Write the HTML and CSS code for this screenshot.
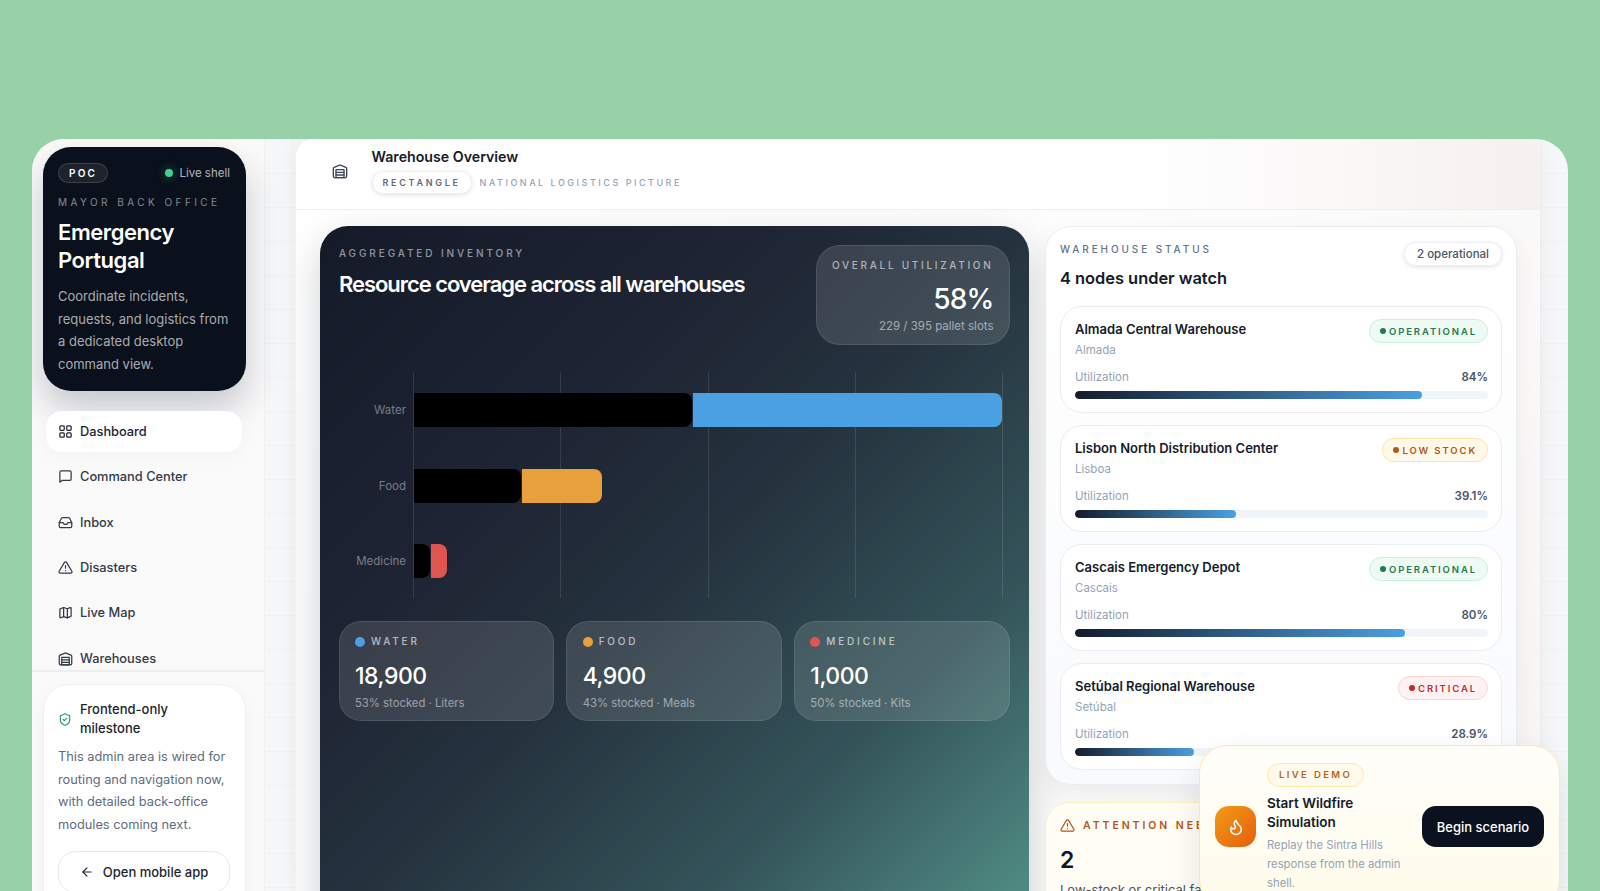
FILE: index.html
```html
<!DOCTYPE html>
<html lang="en">
<head>
  <meta charset="UTF-8" />
  <title>Warehouse Overview</title>
  <link rel="stylesheet" href="styles.css">
</head>
<body>
  <div class="window">
    <!-- Sidebar -->
    <aside class="sidebar">
      <div class="hero">
        <div class="hero-top">
          <span class="poc">POC</span>
          <span class="live"><i class="live-dot"></i>Live shell</span>
        </div>
        <div class="hero-eyebrow">MAYOR BACK OFFICE</div>
        <h1 class="hero-title">Emergency Portugal</h1>
        <p class="hero-text">Coordinate incidents, requests, and logistics from a dedicated desktop command view.</p>
      </div>

      <nav class="nav">
        <a class="nav-item active">
          <svg class="icon" viewBox="0 0 24 24"><rect x="3" y="3" width="7" height="7" rx="1.5"/><rect x="14" y="3" width="7" height="7" rx="1.5"/><rect x="3" y="14" width="7" height="7" rx="1.5"/><rect x="14" y="14" width="7" height="7" rx="1.5"/></svg>
          Dashboard
        </a>
        <a class="nav-item">
          <svg class="icon" viewBox="0 0 24 24"><path d="M3 21V5a2 2 0 0 1 2-2h14a2 2 0 0 1 2 2v11a2 2 0 0 1-2 2H7z"/></svg>
          Command Center
        </a>
        <a class="nav-item">
          <svg class="icon" viewBox="0 0 24 24"><path d="M22 12h-6l-2 3h-4l-2-3H2"/><path d="M5.5 5.1 2 12v6a2 2 0 0 0 2 2h16a2 2 0 0 0 2-2v-6l-3.500-6.900A2 2 0 0 0 16.800 4H7.200a2 2 0 0 0-1.700 1.100z"/></svg>
          Inbox
        </a>
        <a class="nav-item">
          <svg class="icon" viewBox="0 0 24 24"><path d="M10.300 3.900 1.800 18a2 2 0 0 0 1.700 3h17a2 2 0 0 0 1.700-3L13.700 3.900a2 2 0 0 0-3.400 0z"/><path d="M12 9v4"/><path d="M12 17h.01"/></svg>
          Disasters
        </a>
        <a class="nav-item">
          <svg class="icon" viewBox="0 0 24 24"><path d="M9 4 3.500 6.200A1 1 0 0 0 3 7v12.500a1 1 0 0 0 1.400.900L9 18.500l6 2 5.500-2.200a1 1 0 0 0 .5-.800V5a1 1 0 0 0-1.400-.900L15 6z"/><path d="M9 4v14.500"/><path d="M15 6v14.500"/></svg>
          Live Map
        </a>
        <a class="nav-item">
          <svg class="icon" viewBox="0 0 24 24"><path d="M22 8.350V20a2 2 0 0 1-2 2H4a2 2 0 0 1-2-2V8.350A2 2 0 0 1 3.260 6.500l8-3.200a2 2 0 0 1 1.480 0l8 3.200A2 2 0 0 1 22 8.350z"/><path d="M6 18h12"/><path d="M6 14h12"/><rect x="6" y="10" width="12" height="12"/></svg>
          Warehouses
        </a>
      </nav>

      <div class="milestone">
        <div class="milestone-head">
          <svg class="shield" viewBox="0 0 24 24"><path d="M20 13c0 5-3.500 7.500-7.660 8.950a1 1 0 0 1-.67-.01C7.500 20.500 4 18 4 13V6a1 1 0 0 1 1-1c2 0 4.500-1.200 6.240-2.720a1.170 1.170 0 0 1 1.520 0C14.510 3.810 17 5 19 5a1 1 0 0 1 1 1z"/><path d="m9 12 2 2 4-4"/></svg>
          <span>Frontend-only milestone</span>
        </div>
        <p class="milestone-text">This admin area is wired for routing and navigation now, with detailed back-office modules coming next.</p>
        <a class="mobile-btn">
          <svg class="arrow" viewBox="0 0 24 24"><path d="m12 19-7-7 7-7"/><path d="M19 12H5"/></svg>
          Open mobile app
        </a>
      </div>
    </aside>

    <!-- Main panel -->
    <main class="main">
      <header class="topbar">
        <svg class="topbar-icon" viewBox="0 0 24 24"><path d="M22 8.350V20a2 2 0 0 1-2 2H4a2 2 0 0 1-2-2V8.350A2 2 0 0 1 3.260 6.500l8-3.200a2 2 0 0 1 1.480 0l8 3.200A2 2 0 0 1 22 8.350z"/><path d="M6 18h12"/><path d="M6 14h12"/><rect x="6" y="10" width="12" height="12"/></svg>
        <div>
          <div class="topbar-title">Warehouse Overview</div>
          <div class="topbar-sub">
            <span class="topbar-pill">RECTANGLE</span>
            <span class="topbar-note">NATIONAL LOGISTICS PICTURE</span>
          </div>
        </div>
      </header>

      <div class="content">
        <!-- Inventory -->
        <section class="inventory">
          <div class="inventory-head">
            <div>
              <div class="inventory-eyebrow">AGGREGATED INVENTORY</div>
              <h2 class="inventory-title">Resource coverage across all warehouses</h2>
            </div>
            <div class="overall">
              <div class="overall-label">OVERALL UTILIZATION</div>
              <div class="overall-value">58%</div>
              <div class="overall-sub">229 / 395 pallet slots</div>
            </div>
          </div>

          <div class="chart">
            <div class="chart-grid">
              <i></i><i></i><i></i><i></i><i></i>
            </div>
            <div class="chart-row">
              <span class="chart-label">Water</span>
              <div class="bar-used" style="width: 278px"></div>
              <div class="bar-rest bar-water" style="width: 309px"></div>
            </div>
            <div class="chart-row">
              <span class="chart-label">Food</span>
              <div class="bar-used" style="width: 107px"></div>
              <div class="bar-rest bar-food" style="width: 80px"></div>
            </div>
            <div class="chart-row">
              <span class="chart-label">Medicine</span>
              <div class="bar-used" style="width: 15.500px"></div>
              <div class="bar-rest bar-medicine" style="width: 16.500px"></div>
            </div>
          </div>

          <div class="stats">
            <div class="stat">
              <div class="stat-label"><i class="stat-dot dot-water"></i>WATER</div>
              <div class="stat-value">18,900</div>
              <div class="stat-sub">53% stocked · Liters</div>
            </div>
            <div class="stat">
              <div class="stat-label"><i class="stat-dot dot-food"></i>FOOD</div>
              <div class="stat-value">4,900</div>
              <div class="stat-sub">43% stocked · Meals</div>
            </div>
            <div class="stat">
              <div class="stat-label"><i class="stat-dot dot-medicine"></i>MEDICINE</div>
              <div class="stat-value">1,000</div>
              <div class="stat-sub">50% stocked · Kits</div>
            </div>
          </div>
        </section>

        <!-- Right column -->
        <div class="side-col">
          <section class="status">
            <div class="status-head">
              <div>
                <div class="status-eyebrow">WAREHOUSE STATUS</div>
                <h2 class="status-title">4 nodes under watch</h2>
              </div>
              <span class="status-pill">2 operational</span>
            </div>

            <div class="node">
              <div class="node-top">
                <div>
                  <div class="node-name">Almada Central Warehouse</div>
                  <div class="node-place">Almada</div>
                </div>
                <span class="badge badge-ok"><i></i>OPERATIONAL</span>
              </div>
              <div class="node-util"><span>Utilization</span><b>84%</b></div>
              <div class="track"><div class="fill" style="width: 84%"></div></div>
            </div>

            <div class="node">
              <div class="node-top">
                <div>
                  <div class="node-name">Lisbon North Distribution Center</div>
                  <div class="node-place">Lisboa</div>
                </div>
                <span class="badge badge-low"><i></i>LOW STOCK</span>
              </div>
              <div class="node-util"><span>Utilization</span><b>39.1%</b></div>
              <div class="track"><div class="fill" style="width: 39.1%"></div></div>
            </div>

            <div class="node">
              <div class="node-top">
                <div>
                  <div class="node-name">Cascais Emergency Depot</div>
                  <div class="node-place">Cascais</div>
                </div>
                <span class="badge badge-ok"><i></i>OPERATIONAL</span>
              </div>
              <div class="node-util"><span>Utilization</span><b>80%</b></div>
              <div class="track"><div class="fill" style="width: 80%"></div></div>
            </div>

            <div class="node">
              <div class="node-top">
                <div>
                  <div class="node-name">Setúbal Regional Warehouse</div>
                  <div class="node-place">Setúbal</div>
                </div>
                <span class="badge badge-crit"><i></i>CRITICAL</span>
              </div>
              <div class="node-util"><span>Utilization</span><b>28.9%</b></div>
              <div class="track"><div class="fill" style="width: 28.9%"></div></div>
            </div>
          </section>

          <section class="attention">
            <div class="attention-head">
              <svg class="attention-icon" viewBox="0 0 24 24"><path d="M10.300 3.900 1.800 18a2 2 0 0 0 1.700 3h17a2 2 0 0 0 1.700-3L13.700 3.900a2 2 0 0 0-3.400 0z"/><path d="M12 9v4"/><path d="M12 17h.01"/></svg>
              ATTENTION NEEDED
            </div>
            <div class="attention-value">2</div>
            <p class="attention-text">Low-stock or critical facilities need review.</p>
          </section>
        </div>
      </div>
    </main>

    <!-- Floating demo prompt -->
    <div class="demo">
      <div class="demo-icon">
        <svg viewBox="0 0 24 24"><path d="M8.500 14.500A2.500 2.500 0 0 0 11 12c0-1.380-.5-2-1-3-1.070-2.140-.220-4.050 2-6 .5 2.500 2 4.900 4 6.500 2 1.600 3 3.500 3 5.500a7 7 0 1 1-14 0c0-1.150.430-2.290 1-3a2.500 2.500 0 0 0 2.500 2.500z"/></svg>
      </div>
      <div class="demo-body">
        <span class="demo-pill">LIVE DEMO</span>
        <div class="demo-title">Start Wildfire Simulation</div>
        <p class="demo-text">Replay the Sintra Hills response from the admin shell.</p>
      </div>
      <a class="demo-btn">Begin scenario</a>
    </div>
  </div>
</body>
</html>
```

FILE: styles.css
```css
:root {
  --ink: #0b111e;
  --slate: #475569;
  --muted: #94a3b8;
  --line: #e8edf4;
}

* {
  box-sizing: border-box;
}

html, body {
  height: 100%;
  margin: 0;
  overflow: hidden;
  background: #97d1a7;
  color: var(--ink);
  font-family: Inter, "Liberation Sans", sans-serif;
}

body {
  padding: 139px 32px 0;
}

p, h1, h2 {
  margin: 0;
}

.window {
  position: relative;
  display: flex;
  height: 752px;
  overflow: hidden;
  border-radius: 32px 32px 0 0;
  background-color: #f6f7f8;
  background-image:
    linear-gradient(rgba(15, 23, 42, 0.025) 1px, transparent 1px),
    linear-gradient(90deg, rgba(15, 23, 42, 0.025) 1px, transparent 1px);
  background-size: 52px 34px;
}

/* Sidebar */
.sidebar {
  flex: 0 0 233px;
  display: flex;
  flex-direction: column;
  background: #fafafa;
  border-right: 1px solid #f0f1f3;
}

.hero {
  flex: none;
  height: 244px;
  margin: 8px 18px 0 11px;
  padding: 16px 16px 0 15px;
  border-radius: 28px;
  background: #0a101c;
  box-shadow: 0 18px 36px rgba(15, 23, 42, 0.22);
  color: #fff;
}

.hero-top {
  display: flex;
  align-items: center;
  justify-content: space-between;
}

.poc {
  padding: 3px 10px;
  border: 1px solid rgba(255, 255, 255, 0.14);
  border-radius: 999px;
  background: rgba(255, 255, 255, 0.08);
  font-size: 10px;
  font-weight: 600;
  letter-spacing: 0.22em;
}

.live {
  display: flex;
  align-items: center;
  gap: 6px;
  font-size: 11.500px;
  color: rgba(255, 255, 255, 0.7);
}

.live-dot {
  width: 8px;
  height: 8px;
  border-radius: 50%;
  background: #45cf8c;
  box-shadow: 0 0 10px rgba(69, 207, 140, 0.5);
}

.hero-eyebrow {
  margin-top: 13px;
  font-size: 10px;
  letter-spacing: 0.345em;
  color: rgba(255, 255, 255, 0.5);
}

.hero-title {
  margin-top: 10px;
  font-size: 22px;
  line-height: 28px;
  font-weight: 600;
  letter-spacing: -0.02em;
}

.hero-text {
  margin-top: 11px;
  font-size: 13px;
  line-height: 22.5px;
  color: rgba(255, 255, 255, 0.66);
}

.nav {
  flex: none;
  display: flex;
  flex-direction: column;
  gap: 4px;
  height: 261px;
  margin-top: 20px;
  padding: 0 22px 0 14px;
  overflow: hidden;
  border-bottom: 2px solid #eceef0;
}

.nav-item {
  flex: none;
  display: flex;
  align-items: center;
  gap: 7px;
  height: 41.300px;
  padding: 0 12px;
  border-radius: 16px;
  font-size: 12.800px;
  font-weight: 500;
  color: #333b49;
}

.nav-item.active {
  background: #fff;
  box-shadow: 0 6px 18px rgba(15, 23, 42, 0.03);
  color: #1c2433;
}

.icon {
  flex: none;
  width: 15px;
  height: 15px;
  fill: none;
  stroke: currentColor;
  stroke-width: 2;
  stroke-linecap: round;
  stroke-linejoin: round;
}

.milestone {
  flex: none;
  height: 240px;
  margin: 12px 18px 0 11px;
  padding: 15px 15px 0 14px;
  border: 1px solid #edf0f5;
  border-radius: 26px;
  background: #fff;
  box-shadow: 0 10px 24px rgba(15, 23, 42, 0.04);
}

.milestone-head {
  display: flex;
  align-items: center;
  gap: 8px;
  font-size: 13px;
  line-height: 19px;
  font-weight: 500;
  color: #1c2433;
}

.shield {
  flex: none;
  width: 14px;
  height: 15px;
  fill: none;
  stroke: #2f9a68;
  stroke-width: 2;
  stroke-linecap: round;
  stroke-linejoin: round;
}

.milestone-text {
  margin-top: 8px;
  font-size: 12.800px;
  line-height: 22.6px;
  color: #5f6b7e;
}

.mobile-btn {
  display: flex;
  align-items: center;
  justify-content: center;
  gap: 9px;
  height: 42px;
  margin-top: 15px;
  border: 1px solid #e5e9f1;
  border-radius: 18px;
  font-size: 13px;
  font-weight: 500;
  color: #1c2433;
}

.arrow {
  width: 14px;
  height: 14px;
  fill: none;
  stroke: currentColor;
  stroke-width: 2;
  stroke-linecap: round;
  stroke-linejoin: round;
}

/* Main panel */
.main {
  flex: 0 0 1244px;
  margin-left: 31px;
  display: flex;
  flex-direction: column;
  background: linear-gradient(180deg, #fff 0%, #f9fafb 100%);
  box-shadow: 0 0 24px rgba(15, 23, 42, 0.06);
  border-radius: 18px 18px 0 0;
}

.topbar {
  flex: none;
  display: flex;
  align-items: center;
  gap: 23.500px;
  height: 71px;
  padding: 0 36px 7px;
  border-bottom: 1px solid #eceef2;
  border-radius: 18px 18px 0 0;
  background: linear-gradient(90deg, #fff 68%, #f6f0ef 100%);
}

.topbar-icon {
  flex: none;
  width: 16px;
  height: 16px;
  fill: none;
  stroke: #3a4658;
  stroke-width: 2;
  stroke-linecap: round;
  stroke-linejoin: round;
}

.topbar-title {
  font-size: 14.200px;
  line-height: 20px;
  font-weight: 600;
  color: #141b2a;
}

.topbar-sub {
  display: flex;
  align-items: center;
  gap: 8px;
  margin-top: 4px;
}

.topbar-pill {
  padding: 5px 10px;
  border: 1px solid #eef0f5;
  border-radius: 999px;
  background: #fff;
  box-shadow: 0 1px 4px rgba(15, 23, 42, 0.12);
  font-size: 9px;
  font-weight: 600;
  letter-spacing: 0.3em;
  color: #5f6b7e;
}

.topbar-note {
  font-size: 9px;
  font-weight: 500;
  letter-spacing: 0.28em;
  color: var(--muted);
}

.content {
  flex: 1;
  display: flex;
  gap: 16px;
  padding: 16px 23px 0 24px;
  overflow: hidden;
  background: linear-gradient(120deg, #fff 0%, #fcfcfc 60%, #f8f5f4 100%);
}

/* Inventory */
.inventory {
  flex: 0 0 709px;
  height: 760px;
  padding: 19px 19.500px 0 19px;
  border-radius: 28px;
  background: linear-gradient(135deg, #141a28 0%, #1e2433 30%, #25323e 48%, #34545a 72%, #4f8a82 93%);
  box-shadow: 0 16px 40px rgba(15, 23, 42, 0.2);
  color: #fff;
}

.inventory-head {
  display: flex;
  justify-content: space-between;
}

.inventory-eyebrow {
  margin-top: 1px;
  font-size: 10px;
  font-weight: 500;
  line-height: 14px;
  letter-spacing: 0.29em;
  color: rgba(255, 255, 255, 0.55);
}

.inventory-title {
  margin-top: 9px;
  font-size: 22px;
  line-height: 30px;
  font-weight: 600;
  letter-spacing: -0.048em;
}

.overall {
  width: 194px;
  height: 100px;
  padding: 12px 15px 0;
  border: 1px solid rgba(255, 255, 255, 0.1);
  border-radius: 24px;
  background: rgba(255, 255, 255, 0.12);
  text-align: right;
}

.overall-label {
  font-size: 10px;
  font-weight: 500;
  line-height: 15px;
  letter-spacing: 0.27em;
  color: rgba(255, 255, 255, 0.6);
  white-space: nowrap;
}

.overall-value {
  margin-top: 9px;
  font-size: 28px;
  line-height: 34px;
  font-weight: 500;
  letter-spacing: -0.03em;
}

.overall-sub {
  margin-top: 2px;
  font-size: 11.500px;
  line-height: 17px;
  color: rgba(255, 255, 255, 0.55);
}

.chart {
  position: relative;
  display: flex;
  flex-direction: column;
  gap: 41.500px;
  height: 226px;
  margin: 27px 0 0;
  padding-top: 21px;
}

.chart-grid {
  position: absolute;
  top: 0;
  bottom: 0;
  left: 74px;
  width: 590px;
  display: flex;
  justify-content: space-between;
}

.chart-grid i {
  width: 1px;
  background: rgba(255, 255, 255, 0.11);
}

.chart-row {
  position: relative;
  display: flex;
  align-items: center;
  height: 34px;
  padding-left: 75px;
}

.chart-label {
  position: absolute;
  left: 0;
  width: 67px;
  text-align: right;
  font-size: 11.500px;
  color: rgba(255, 255, 255, 0.42);
}

.bar-used {
  height: 100%;
  margin-right: 1px;
  border-radius: 0 8px 8px 0;
  background: #000;
}

.bar-rest {
  height: 100%;
  border-radius: 0 8px 8px 0;
}

.bar-water {
  background: #4aa0e3;
}

.bar-food {
  background: #e8a03c;
}

.bar-medicine {
  background: #e0554f;
}

.stats {
  display: flex;
  gap: 12px;
  margin: 23px 0 0 -0.5px;
}

.stat {
  flex: 1;
  height: 100px;
  padding: 12px 15px 0 15.500px;
  border: 1px solid rgba(255, 255, 255, 0.1);
  border-radius: 22px;
  background: rgba(255, 255, 255, 0.12);
}

.stat-label {
  display: flex;
  align-items: center;
  gap: 6px;
  font-size: 10px;
  font-weight: 500;
  line-height: 15px;
  letter-spacing: 0.28em;
  color: rgba(255, 255, 255, 0.65);
}

.stat-dot {
  width: 10px;
  height: 10px;
  border-radius: 50%;
}

.dot-water {
  background: #4aa0e3;
}

.dot-food {
  background: #e8a03c;
}

.dot-medicine {
  background: #e0554f;
}

.stat-value {
  margin-top: 12px;
  font-size: 23px;
  line-height: 30px;
  font-weight: 500;
  letter-spacing: -0.02em;
}

.stat-sub {
  margin-top: 4px;
  font-size: 11.300px;
  line-height: 17px;
  color: rgba(255, 255, 255, 0.5);
}

/* Right column */
.side-col {
  flex: 1;
  display: flex;
  flex-direction: column;
  gap: 17px;
}

.status {
  flex: none;
  height: 559px;
  padding: 15px 14px 0;
  border: 1px solid #e9edf3;
  border-radius: 26px;
  background: linear-gradient(180deg, #fff 0%, #f9fafc 100%);
  box-shadow: 0 10px 26px rgba(15, 23, 42, 0.06);
}

.status-head {
  display: flex;
  justify-content: space-between;
  height: 64px;
}

.status-eyebrow {
  font-size: 10px;
  font-weight: 500;
  line-height: 15px;
  letter-spacing: 0.29em;
  color: #64748b;
}

.status-title {
  margin-top: 9px;
  font-size: 16.400px;
  line-height: 24px;
  font-weight: 600;
  color: #141b2a;
}

.status-pill {
  height: 24px;
  padding: 0 12px;
  border: 1px solid #eef0f5;
  border-radius: 999px;
  background: #fff;
  box-shadow: 0 1px 4px rgba(15, 23, 42, 0.12);
  font-size: 11.500px;
  line-height: 22px;
  font-weight: 500;
  color: #475569;
}

.node {
  height: 107px;
  margin-bottom: 12px;
  padding: 12px 13px 0 14px;
  border: 1px solid var(--line);
  border-radius: 22px;
  background: #fff;
}

.node-top {
  display: flex;
  justify-content: space-between;
  height: 50px;
}

.node-name {
  font-size: 13px;
  line-height: 20px;
  font-weight: 600;
  color: #141b2a;
}

.node-place {
  margin-top: 1px;
  font-size: 11.500px;
  line-height: 20px;
  color: var(--muted);
}

.badge {
  display: flex;
  align-items: center;
  gap: 3px;
  height: 24px;
  padding: 0 10px;
  border: 1px solid;
  border-radius: 999px;
  font-size: 9.500px;
  font-weight: 600;
  letter-spacing: 0.2em;
}

.badge i {
  width: 6px;
  height: 6px;
  border-radius: 50%;
  background: currentColor;
}

.badge-ok {
  border-color: #c9f1dc;
  background: #eefbf4;
  color: #217a52;
}

.badge-low {
  border-color: #fbe6a8;
  background: #fff9ea;
  color: #b4571a;
}

.badge-crit {
  border-color: #fbd5d5;
  background: #fef1f1;
  color: #be2c2c;
}

.node-util {
  display: flex;
  justify-content: space-between;
  font-size: 11.500px;
  line-height: 16px;
  color: var(--muted);
}

.node-util b {
  font-weight: 600;
  color: #475569;
}

.track {
  height: 8px;
  margin-top: 6px;
  border-radius: 999px;
  background: #f1f5f9;
  overflow: hidden;
}

.fill {
  height: 100%;
  border-radius: 999px;
  background: linear-gradient(90deg, #141c2c 0%, #4aa0e3 100%);
}

.attention {
  flex: none;
  height: 130px;
  padding: 15px 14px;
  border: 1px solid #fdeebc;
  border-radius: 24px;
  background: #fffdf4;
}

.attention-head {
  display: flex;
  align-items: center;
  gap: 8px;
  font-size: 10.500px;
  font-weight: 600;
  letter-spacing: 0.28em;
  color: #b4571a;
  white-space: nowrap;
}

.attention-icon {
  width: 15px;
  height: 15px;
  fill: none;
  stroke: currentColor;
  stroke-width: 2;
  stroke-linecap: round;
  stroke-linejoin: round;
}

.attention-value {
  margin-top: 12px;
  font-size: 23px;
  line-height: 30px;
  font-weight: 600;
  color: #0f172a;
}

.attention-text {
  margin-top: 5px;
  font-size: 13px;
  line-height: 20px;
  color: #475569;
  white-space: nowrap;
}

/* Floating demo prompt */
.demo {
  position: absolute;
  top: 606px;
  left: 1167px;
  display: flex;
  align-items: center;
  gap: 11px;
  width: 361px;
  padding: 0 15px;
  border: 1px solid #fde9a8;
  border-radius: 28px;
  background: linear-gradient(180deg, #fffefa 0%, #fffbea 100%);
  box-shadow: 0 14px 34px rgba(15, 23, 42, 0.1);
}

.demo-icon {
  flex: none;
  display: flex;
  align-items: center;
  justify-content: center;
  width: 41px;
  height: 41px;
  border-radius: 14px;
  background: linear-gradient(135deg, #f29c16 0%, #e75e0c 100%);
}

.demo-icon svg {
  width: 18px;
  height: 18px;
  fill: none;
  stroke: #fff;
  stroke-width: 2;
  stroke-linecap: round;
  stroke-linejoin: round;
}

.demo-body {
  flex: 1;
  padding: 16px 0 14px;
}

.demo-pill {
  display: inline-block;
  height: 24px;
  padding: 0 11px;
  border: 1px solid #fde9a8;
  border-radius: 999px;
  background: #fffaeb;
  font-size: 9.500px;
  line-height: 22px;
  font-weight: 600;
  letter-spacing: 0.25em;
  color: #b4632a;
}

.demo-title {
  margin-top: 7px;
  font-size: 13.500px;
  line-height: 19px;
  font-weight: 600;
  color: #141b2a;
}

.demo-text {
  margin-top: 4px;
  font-size: 11.300px;
  line-height: 19px;
  color: var(--muted);
}

.demo-btn {
  flex: none;
  display: flex;
  align-items: center;
  justify-content: center;
  width: 122px;
  height: 41px;
  border-radius: 14px;
  background: var(--ink);
  font-size: 13px;
  font-weight: 500;
  color: #fff;
}
```
